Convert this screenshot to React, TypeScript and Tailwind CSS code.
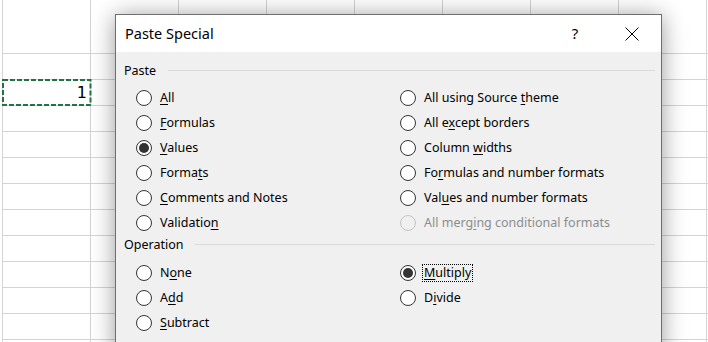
import React from "react";

const font = { fontFamily: '"Noto Sans", "Open Sans", sans-serif' };

type Opt = { label: string; k: number; checked?: boolean; disabled?: boolean; focus?: boolean };

const pasteLeft: Opt[] = [
  { label: "All", k: 0 },
  { label: "Formulas", k: 0 },
  { label: "Values", k: 0, checked: true },
  { label: "Formats", k: 5 },
  { label: "Comments and Notes", k: 0 },
  { label: "Validation", k: 9 },
];

const pasteRight: Opt[] = [
  { label: "All using Source theme", k: 17 },
  { label: "All except borders", k: 5 },
  { label: "Column widths", k: 7 },
  { label: "Formulas and number formats", k: 2 },
  { label: "Values and number formats", k: 3 },
  { label: "All merging conditional formats", k: 8, disabled: true },
];

const opLeft: Opt[] = [
  { label: "None", k: 1 },
  { label: "Add", k: 1 },
  { label: "Subtract", k: 0 },
];

const opRight: Opt[] = [
  { label: "Multiply", k: 0, checked: true, focus: true },
  { label: "Divide", k: 1 },
];

function Radio({ opt }: { opt: Opt }) {
  const { label, k, checked, disabled, focus } = opt;
  return (
    <div className="flex items-center h-[25px]">
      <span
        className={`w-[16px] h-[16px] rounded-full border shrink-0 flex items-center justify-center ${
          disabled ? "border-[#c4c4c4] bg-[#f0f0f0]" : "border-[#333333] bg-white"
        }`}
      >
        {checked && <span className="w-[10px] h-[10px] rounded-full bg-[#333333]" />}
      </span>
      <span
        className={`ml-[6px] text-[12.5px] leading-[16px] px-[1px] border border-dotted ${
          focus ? "border-black" : "border-transparent"
        } ${disabled ? "text-[#8d8d8d]" : "text-black"}`}
      >
        {label.slice(0, k)}
        <span className="underline underline-offset-[2px]">{label[k]}</span>
        {label.slice(k + 1)}
      </span>
    </div>
  );
}

function Section({ title, left, right, gap }: { title: string; left: Opt[]; right: Opt[]; gap: string }) {
  return (
    <div>
      <div className="flex items-center h-[20px]">
        <span className="text-[12.5px] text-black">{title}</span>
        <span className="flex-1 h-px bg-[#dadada] ml-[12px] -mt-[2px]" />
      </div>
      <div className={`grid grid-cols-[264px_1fr] pl-[12px] ${gap}`}>
        <div className="flex flex-col">
          {left.map((o) => (
            <Radio key={o.label} opt={o} />
          ))}
        </div>
        <div className="flex flex-col">
          {right.map((o) => (
            <Radio key={o.label} opt={o} />
          ))}
        </div>
      </div>
    </div>
  );
}

function Sheet() {
  const rows = Array.from({ length: 13 });
  const cols = Array.from({ length: 9 });
  return (
    <div className="pl-[2px]">
      {rows.map((_, r) => (
        <div key={r} className={`flex ${r === 0 ? "h-[54px]" : "h-[26px]"}`}>
          {cols.map((_, c) => (
            <div
              key={c}
              className={`relative shrink-0 border-r border-b border-[#d4d4d4] ${
                c === 0 ? "w-[89px] border-l" : "w-[88px]"
              } ${r === 2 && c === 0 ? "flex items-center justify-end pr-[3px]" : ""}`}
            >
              {r === 2 && c === 0 && (
                <>
                  <span className="text-[16px] leading-none text-black" style={{ fontFamily: '"DejaVu Sans", sans-serif' }}>
                    1
                  </span>
                  <svg className="absolute left-[-1px] top-[-1px]" width="90" height="27">
                    <rect x="1" y="1" width="87.5" height="25" fill="none" stroke="#217346" strokeWidth="2" strokeDasharray="5 2" />
                  </svg>
                </>
              )}
            </div>
          ))}
        </div>
      ))}
    </div>
  );
}

export default function App() {
  return (
    <div className="relative w-[708px] h-[342px] overflow-hidden bg-white" style={font}>
      <Sheet />
      <div className="absolute left-[115px] top-[14px] w-[547px] h-[340px] border border-[#6e6e6e] bg-[#f0f0f0] shadow-[0_2px_22px_rgba(0,0,0,0.4)]">
        <div className="h-[37px] bg-white flex items-center pl-[9px]">
          <span className="text-[14.5px] text-black">Paste Special</span>
          <div className="ml-auto flex items-center pr-[6px]">
            <span className="w-[46px] mr-[11px] text-center text-[15px] text-black">?</span>
            <span className="w-[46px] flex justify-center">
              <svg width="14" height="14" viewBox="0 0 14 14">
                <path d="M0.5 0.5 L13.5 13.5 M13.5 0.5 L0.5 13.5" stroke="#000" strokeWidth="1" fill="none" />
              </svg>
            </span>
          </div>
        </div>
        <div className="pt-[9px] pl-[8px] pr-[6px]">
          <Section title="Paste" left={pasteLeft} right={pasteRight} gap="mt-[4px]" />
          <Section title="Operation" left={opLeft} right={opRight} gap="mt-[5px]" />
        </div>
      </div>
    </div>
  );
}
